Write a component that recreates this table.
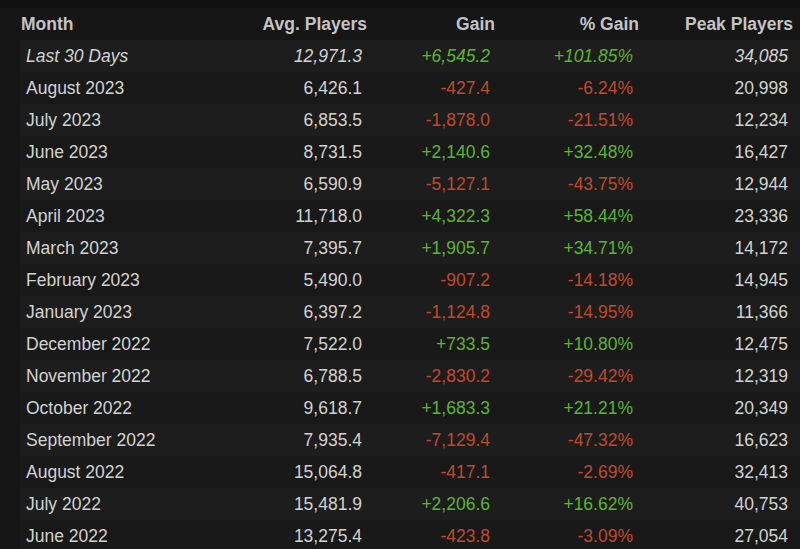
import React from "react";

const rows = [
  { month: "Last 30 Days", avg: "12,971.3", gain: "+6,545.2", pct: "+101.85%", peak: "34,085", italic: true },
  { month: "August 2023", avg: "6,426.1", gain: "-427.4", pct: "-6.24%", peak: "20,998" },
  { month: "July 2023", avg: "6,853.5", gain: "-1,878.0", pct: "-21.51%", peak: "12,234" },
  { month: "June 2023", avg: "8,731.5", gain: "+2,140.6", pct: "+32.48%", peak: "16,427" },
  { month: "May 2023", avg: "6,590.9", gain: "-5,127.1", pct: "-43.75%", peak: "12,944" },
  { month: "April 2023", avg: "11,718.0", gain: "+4,322.3", pct: "+58.44%", peak: "23,336" },
  { month: "March 2023", avg: "7,395.7", gain: "+1,905.7", pct: "+34.71%", peak: "14,172" },
  { month: "February 2023", avg: "5,490.0", gain: "-907.2", pct: "-14.18%", peak: "14,945" },
  { month: "January 2023", avg: "6,397.2", gain: "-1,124.8", pct: "-14.95%", peak: "11,366" },
  { month: "December 2022", avg: "7,522.0", gain: "+733.5", pct: "+10.80%", peak: "12,475" },
  { month: "November 2022", avg: "6,788.5", gain: "-2,830.2", pct: "-29.42%", peak: "12,319" },
  { month: "October 2022", avg: "9,618.7", gain: "+1,683.3", pct: "+21.21%", peak: "20,349" },
  { month: "September 2022", avg: "7,935.4", gain: "-7,129.4", pct: "-47.32%", peak: "16,623" },
  { month: "August 2022", avg: "15,064.8", gain: "-417.1", pct: "-2.69%", peak: "32,413" },
  { month: "July 2022", avg: "15,481.9", gain: "+2,206.6", pct: "+16.62%", peak: "40,753" },
  { month: "June 2022", avg: "13,275.4", gain: "-423.8", pct: "-3.09%", peak: "27,054" },
];

const cols = "grid grid-cols-[230px_122px_128px_144px_154px] items-center";
const tone = (v) => (v.startsWith("+") ? "text-[#5cb52f]" : "text-[#c2492b]");

export default function App() {
  return (
    <div className="w-[800px] h-[549px] overflow-hidden bg-[#161616] font-['Liberation_Sans',Arial,sans-serif] text-[17.5px]">
      <div className="h-[8px] bg-[#101010]" />
      <div className="pl-[20px]">
        <div className={`${cols} h-[32px] font-bold text-[#c4c4c4]`}>
          <div className="pl-[1px]">Month</div>
          <div className="text-right pr-[5px]">Avg. Players</div>
          <div className="text-right pr-[5px]">Gain</div>
          <div className="text-right pr-[5px]">% Gain</div>
          <div className="text-right pr-[5px]">Peak Players</div>
        </div>
        {rows.map((r, i) => (
          <div
            key={r.month}
            className={`${cols} h-[32px] text-[#d2d2d2] ${i % 2 === 0 ? "bg-[#1d1d1d]" : "bg-[#191919]"} ${r.italic ? "italic" : ""}`}
          >
            <div className="pl-[6px]">{r.month}</div>
            <div className="text-right pr-[10px]">{r.avg}</div>
            <div className={`text-right pr-[10px] ${tone(r.gain)}`}>{r.gain}</div>
            <div className={`text-right pr-[11px] ${tone(r.pct)}`}>{r.pct}</div>
            <div className="text-right pr-[10px]">{r.peak}</div>
          </div>
        ))}
      </div>
    </div>
  );
}
